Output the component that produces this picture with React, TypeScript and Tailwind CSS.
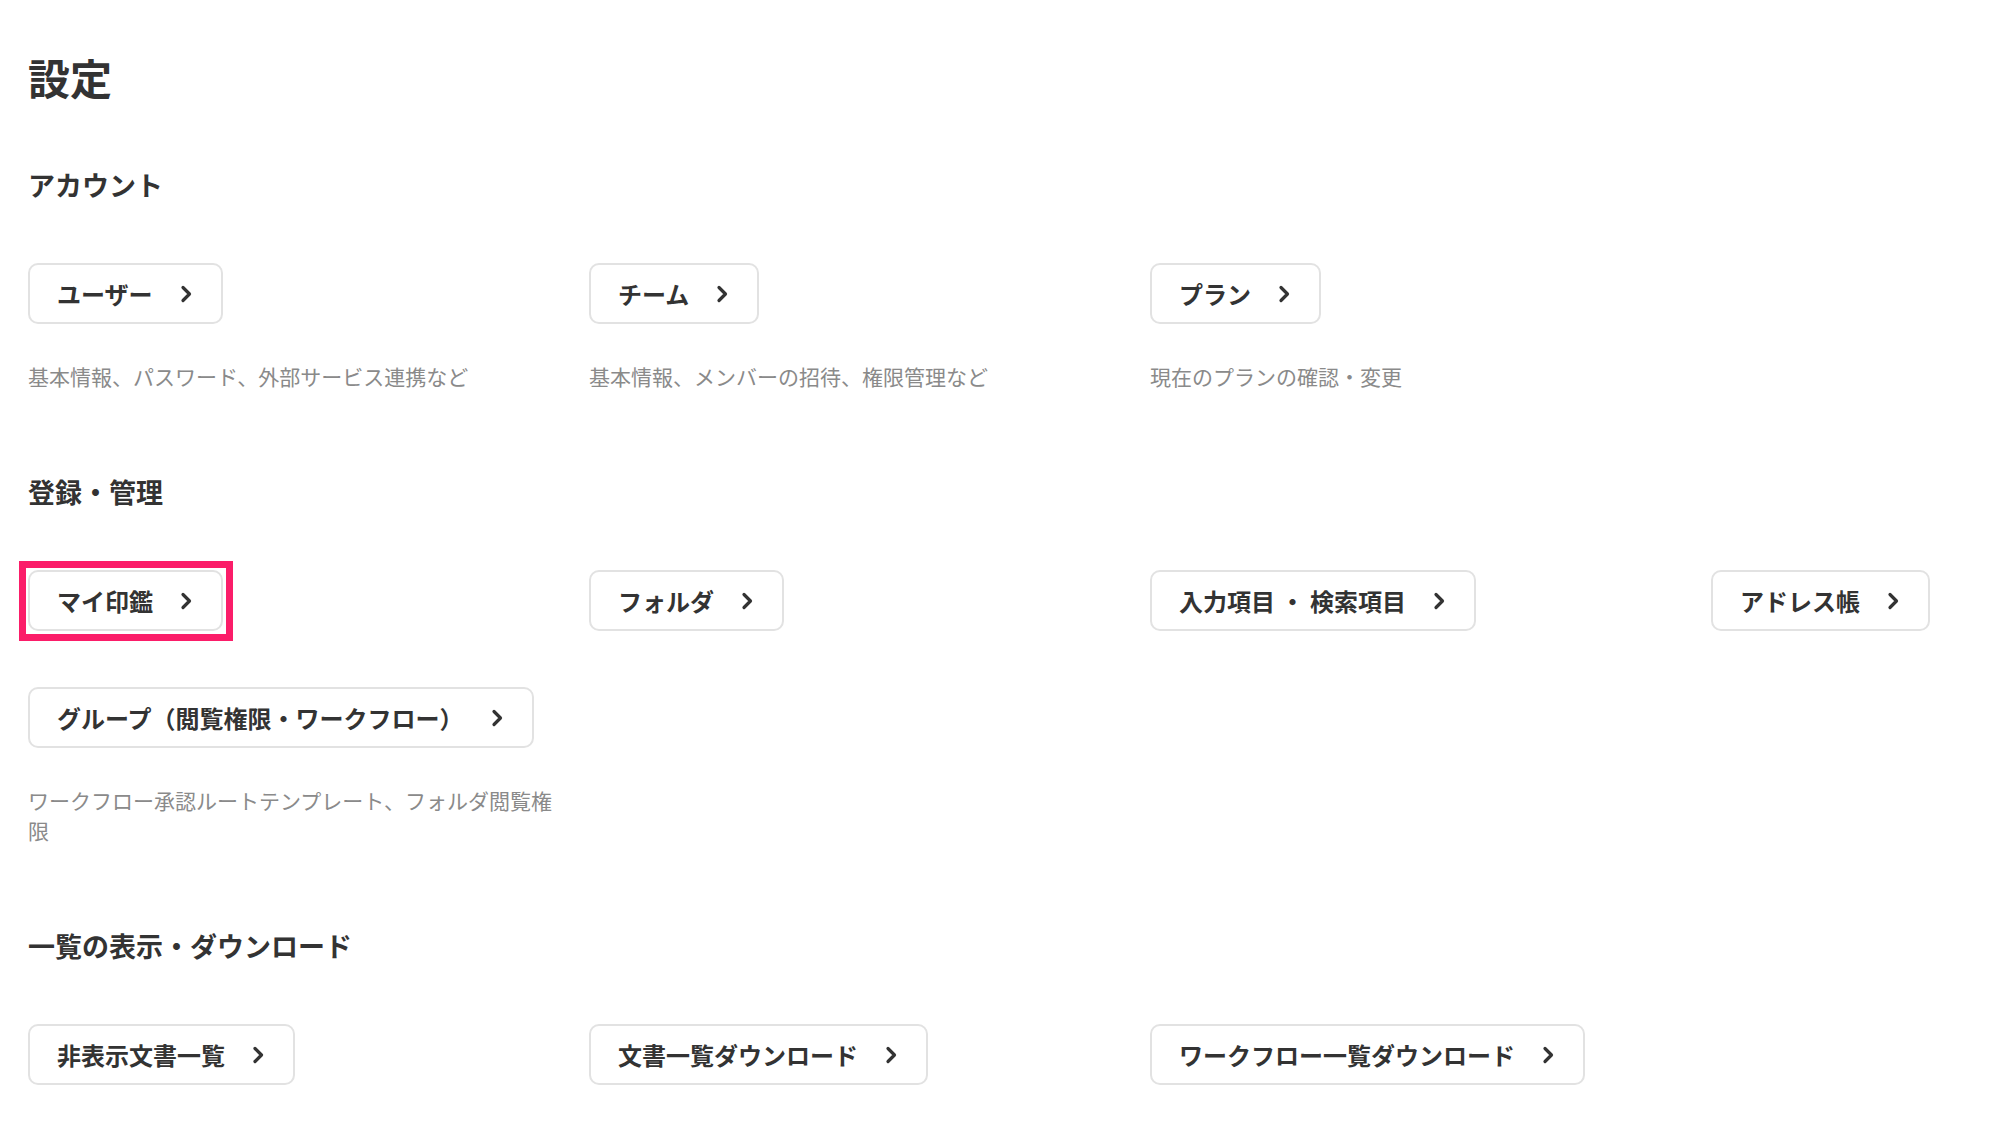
import React from 'react';

interface SettingItem {
  label: string;
  description?: string;
  highlighted?: boolean;
}

interface SettingSection {
  title: string;
  items: SettingItem[];
}

const sections: SettingSection[] = [
  {
    title: 'アカウント',
    items: [
      { label: 'ユーザー', description: '基本情報、パスワード、外部サービス連携など' },
      { label: 'チーム', description: '基本情報、メンバーの招待、権限管理など' },
      { label: 'プラン', description: '現在のプランの確認・変更' },
    ],
  },
  {
    title: '登録・管理',
    items: [
      { label: 'マイ印鑑', highlighted: true },
      { label: 'フォルダ' },
      { label: '入力項目 ・ 検索項目' },
      { label: 'アドレス帳' },
      { label: 'グループ（閲覧権限・ワークフロー）', description: 'ワークフロー承認ルートテンプレート、フォルダ閲覧権限' },
    ],
  },
  {
    title: '一覧の表示・ダウンロード',
    items: [
      { label: '非表示文書一覧' },
      { label: '文書一覧ダウンロード' },
      { label: 'ワークフロー一覧ダウンロード' },
    ],
  },
];

const Chevron: React.FC = () => (
  <svg width="13" height="20" viewBox="0 0 13 20" fill="none" className="shrink-0">
    <path d="M3 3.5 9.5 10 3 16.5" stroke="#333" strokeWidth="3.2" strokeLinecap="round" strokeLinejoin="round" />
  </svg>
);

const SettingButton: React.FC<{ item: SettingItem }> = ({ item }) => (
  <div className="relative inline-flex self-start">
    <button className="inline-flex h-[61px] items-center gap-[27px] whitespace-nowrap rounded-[10px] border-2 border-[#e2e2e2] bg-white pl-[27px] pr-[28px] text-[24px] font-bold text-[#333]">
      <span>{item.label}</span>
      <Chevron />
    </button>
    {item.highlighted && (
      <div className="pointer-events-none absolute -top-[9px] -bottom-[10px] -left-[9px] -right-[10px] border-[7px] border-[#fb1d69]" />
    )}
  </div>
);

const App: React.FC = () => {
  return (
    <div className="min-h-screen bg-white font-['Noto_Sans_CJK_JP',sans-serif] text-[#333]">
      <main className="px-[28px] pt-[47px] pb-10">
        <h1 className="text-[42px] font-bold leading-[60px] text-[#333]">設定</h1>

        {sections.map((section, i) => (
          <section key={section.title} className={i === 0 ? 'mt-[58px]' : 'mt-[81px]'}>
            <h2 className="mb-[58px] text-[27px] font-bold leading-[40px] text-[#333]">{section.title}</h2>
            <div className="grid grid-cols-[536px_536px_536px_1fr] gap-x-[25px] gap-y-[56px]">
              {section.items.map((item) => (
                <div key={item.label} className="flex flex-col">
                  <SettingButton item={item} />
                  {item.description && (
                    <p className="mt-[37px] text-[21px] leading-[30px] text-[#8a8a8a]">{item.description}</p>
                  )}
                </div>
              ))}
            </div>
          </section>
        ))}
      </main>
    </div>
  );
};

export default App;
